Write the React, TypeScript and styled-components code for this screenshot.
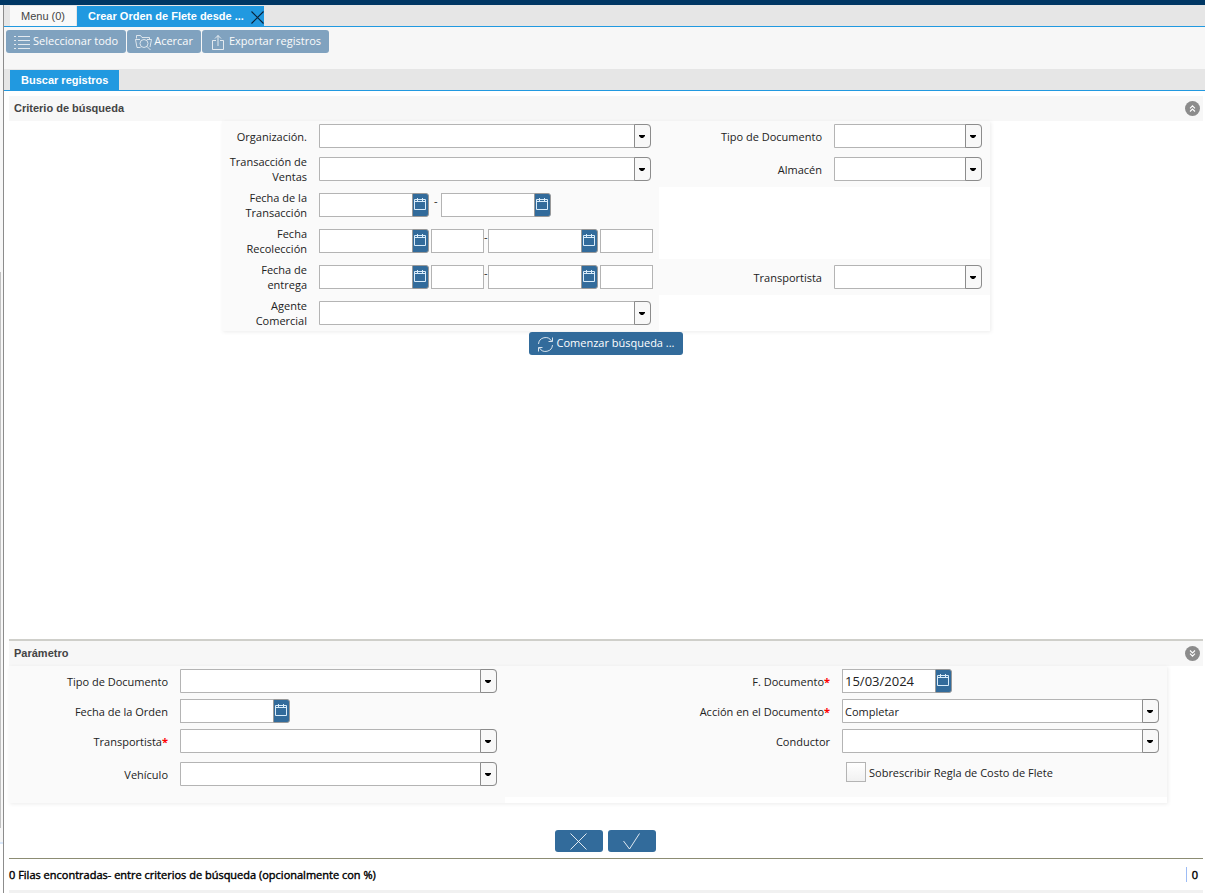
import React, { useId, useState } from "react";
import type { ReactNode } from "react";
import styled, { createGlobalStyle, css } from "styled-components";

const GlobalStyle = createGlobalStyle`
  *, *::before, *::after { box-sizing: border-box; }
  body { margin: 0; background: #fff; }
  body, button, input, select { font-family: "Open Sans", "Noto Sans", sans-serif; font-size: 11px; color: #222; }
`;

const arial = css`
  font-family: "Liberation Sans", Arial, sans-serif;
`;

const Page = styled.div`
  display: flex;
  flex-direction: column;
  min-height: 100vh;
`;
const TopBar = styled.header`
  height: 5px;
  background: #003764;
`;
const Body = styled.div`
  flex: 1;
  display: flex;
`;
const SideStrip = styled.aside`
  width: 4px;
  border-right: 1px solid #8c8c8c;
  background: #f7f7f7;
  display: flex;
  flex-direction: column;
`;
const SideContent = styled.div`
  flex: 1;
  margin-top: 67px;
  padding-top: 200px;
  background: #f7f7f7;
  border-bottom: 2px solid #d9e8fb;
  display: flex;
`;
const SideScroll = styled.div`
  width: 1px;
  margin-bottom: 14px;
  background: #c1c1c1;
`;
const SideFoot = styled.div`
  height: 49px;
  background: #fff;
`;
const Main = styled.main`
  flex: 1;
  min-width: 0;
  display: flex;
  flex-direction: column;
`;

const TabStrip = styled.nav`
  display: flex;
  gap: 1px;
  height: 22px;
  padding: 1px 0 0 6px;
  background: #e6e6e6;
  border-bottom: 1px solid #2199e0;
`;
const Tab = styled.button<{ $active?: boolean }>`
  ${arial}
  display: flex;
  align-items: center;
  gap: 7px;
  height: 20px;
  padding: 0 11px;
  border: 0;
  font-size: 11px;
  white-space: nowrap;
  background: ${(p) => (p.$active ? "#2199e0" : "#f9f9f9")};
  color: ${(p) => (p.$active ? "#fff" : "#444")};
  font-weight: ${(p) => (p.$active ? "bold" : "normal")};
`;
const ClosableTab = styled(Tab)`
  padding-right: 0;
  & svg { margin-top: 2px; }
`;

const Toolbar = styled.div`
  display: flex;
  align-items: flex-start;
  gap: 1px;
  height: 42px;
  padding: 3px 2px;
  background: #f7f7f7;
`;
const ActionButton = styled.button`
  display: flex;
  align-items: center;
  justify-content: center;
  gap: 2px;
  height: 23px;
  padding: 0 8px 2px;
  border: 0;
  border-radius: 3px;
  background: #326b9b;
  color: #fff;
  font-size: 11px;
  white-space: nowrap;
  &:disabled { opacity: 0.6; }
  & svg { flex: none; margin-top: 4px; }
`;
const IconButton = styled(ActionButton)`
  width: 48px;
  height: 22px;
  padding: 0;
  & svg { margin-top: 0; }
`;

const Content = styled.div`
  flex: 1;
  display: flex;
  flex-direction: column;
  padding: 5px 2px 0 5px;
`;
const Section = styled.section<{ $grow?: boolean }>`
  display: flex;
  flex-direction: column;
  flex: ${(p) => (p.$grow ? 1 : "none")};
`;
const SectionHead = styled.div<{ $ruled?: boolean }>`
  display: flex;
  align-items: center;
  justify-content: space-between;
  padding: 0 3px 0 5px;
  background: #f7f7f7;
  border-top: ${(p) => (p.$ruled ? "2px solid #cfcfca" : "0")};
`;
const SectionTitle = styled.h2`
  ${arial}
  margin: 0;
  font-size: 11px;
  line-height: 25px;
  color: #444;
`;
const RoundButton = styled.button`
  display: flex;
  align-items: center;
  justify-content: center;
  width: 15px;
  height: 15px;
  padding: 0;
  border: 0;
  border-radius: 50%;
  background: #8c8c8c;
`;

const SearchGrid = styled.div`
  display: grid;
  grid-template-columns: 97px 340fr 175px 156fr;
  grid-template-rows: 33px 33px repeat(4, 36px);
  width: 100%;
  max-width: 768px;
  margin: 0 auto;
  box-shadow: 1px 1px 4px rgba(0, 0, 0, 0.08);
`;
const ParamGrid = styled.div`
  display: grid;
  grid-template-columns: 171px 325fr 337px 325fr;
  grid-template-rows: 30px 30px 33px 38px 6px;
  margin-right: 36px;
  box-shadow: 1px 1px 4px rgba(0, 0, 0, 0.08);
`;
const LabelCell = styled.div<{ $center?: boolean }>`
  display: flex;
  align-items: ${(p) => (p.$center ? "center" : "flex-start")};
  justify-content: flex-end;
  padding-right: 12px;
  background: #fafafa;
`;
const FieldLabel = styled.label`
  display: flex;
  flex-direction: column;
  justify-content: center;
  min-height: 30px;
  line-height: 15px;
  text-align: right;
`;
const Required = styled.span`
  color: #f00;
  font-weight: bold;
`;
const FieldCell = styled.div<{ $center?: boolean }>`
  display: flex;
  align-items: ${(p) => (p.$center ? "center" : "flex-start")};
  min-width: 0;
  padding: ${(p) => (p.$center ? "0 8px 0 0" : "3px 8px 0 0")};
  background: #fafafa;
`;
const BlankCell = styled.div<{ $tinted?: boolean }>`
  grid-column: span 2;
  background: ${(p) => (p.$tinted ? "#fafafa" : "#fff")};
`;

const ComboBox = styled.div`
  flex: 1;
  display: grid;
  grid-template-columns: 1fr 17px;
  height: 24px;
`;
const ComboSelect = styled.select`
  grid-area: 1 / 1 / 2 / 3;
  appearance: none;
  min-width: 0;
  padding: 0 20px 0 2px;
  border: 1px solid #b4b4b4;
  border-radius: 0 4px 4px 0;
  background: #fff;
`;
const ComboArrow = styled.span`
  grid-area: 1 / 2 / 2 / 3;
  display: flex;
  align-items: center;
  justify-content: center;
  padding-right: 1px;
  border: 1px solid #8c8c8c;
  border-radius: 0 4px 4px 0;
  background: #f8f8f8;
  pointer-events: none;
`;

const DateBox = styled.div`
  display: flex;
  flex: none;
  width: 110px;
  height: 24px;
`;
const DateInput = styled.input`
  width: 93px;
  padding: 0 2px;
  border: 1px solid #b4b4b4;
  border-right: 0;
  background: #fff;
  font-size: 13px;
`;
const DateButton = styled.button`
  display: flex;
  width: 17px;
  padding: 3px 0 0 1px;
  border: 1px solid #999;
  border-radius: 0 3px 3px 0;
  background: #326b9b;
`;
const TimeInput = styled.input`
  flex: none;
  width: 53px;
  height: 24px;
  margin-left: 2px;
  border: 1px solid #b4b4b4;
  background: #fff;
`;
const Dash = styled.span<{ $wide?: boolean }>`
  flex: none;
  width: ${(p) => (p.$wide ? 12 : 4)}px;
  padding-left: ${(p) => (p.$wide ? 5 : 0)}px;
  line-height: 15px;
  align-self: flex-start;
  margin-top: 6px;
`;

const CheckLabel = styled.label`
  display: flex;
  align-items: center;
  gap: 3px;
  padding-left: 4px;
`;
const CheckInput = styled.input`
  appearance: none;
  width: 20px;
  height: 20px;
  margin: 0;
  border: 1px solid #b4b4b4;
  background: linear-gradient(#fff, #f1f1f1);
  &:checked { background: #326b9b; }
`;

const SearchAction = styled.div`
  display: flex;
  justify-content: center;
  padding-top: 1px;
`;
const ConfirmBar = styled.div`
  display: flex;
  justify-content: center;
  gap: 5px;
  padding: 27px 2px 6px 0;
`;
const StatusBar = styled.footer`
  display: flex;
  align-items: flex-start;
  justify-content: space-between;
  height: 35px;
  padding: 8px 5px 0 0;
  border-top: 1px solid #8c8c73;
  border-bottom: 3px solid #f1f1f1;
  color: #000;
  line-height: 15px;
  -webkit-text-stroke: 0.4px #000;
`;
const RowCount = styled.span`
  padding-left: 5px;
  border-left: 1px solid #9dbcf5;
`;

const CloseIcon = () => (
  <svg width="13" height="13" viewBox="0 0 13 13" fill="none" stroke="#0b2238" strokeWidth="1.1">
    <path d="M.5.5l12 12M12.5.5l-12 12" />
  </svg>
);
const ListIcon = () => (
  <svg width="17" height="17" viewBox="0 0 17 17" stroke="#fff" strokeOpacity=".8">
    <path d="M0 2.5h2M4 2.5h12M0 6.5h2M4 6.5h12M0 10.5h2M4 10.5h12M0 14.5h2M4 14.5h12" />
  </svg>
);
const FolderSearchIcon = () => (
  <svg width="17" height="17" viewBox="0 0 17 17" fill="none" stroke="#fff" strokeOpacity=".75">
    <path d="M1.5 4.5V1.5H5.5L7 3.5H14.5V5M5 5.5H.5L2 13.5H5.5M12 5.5H16.5L15 13" />
    <circle cx="9" cy="9.5" r="4" />
    <path d="M12 12.5l3.5 3.5" />
  </svg>
);
const ExportIcon = () => (
  <svg width="17" height="17" viewBox="0 0 17 17" fill="none" stroke="#fff" strokeOpacity=".8">
    <path d="M6 6.5H2.5V15.5H13.5V6.5H10M8 12V1.5M5 4.5l3-3 3 3" />
  </svg>
);
const RefreshIcon = () => (
  <svg width="17" height="17" viewBox="0 0 17 17" fill="none" stroke="#fff" strokeOpacity=".8">
    <path d="M1.5 8A7 7 0 0 1 14.5 5M15.5 1.5V5.5H11.5M15.5 9A7 7 0 0 1 2.5 12M1.5 15.5V11.5H5.5" />
  </svg>
);
const CalendarIcon = () => (
  <svg width="12" height="13" viewBox="0 0 12 13" fill="none" stroke="#d9ecfa">
    <path d="M.5 2.5H11.5V12.5H.5ZM.5 4.5H11.5M3.5 1V4M8.5 1V4" />
  </svg>
);
const ChevronsIcon = ({ down }: { down?: boolean }) => (
  <svg width="7" height="7" viewBox="0 0 7 7" fill="none" stroke="#fff" strokeWidth="1.1">
    <path d={down ? "M1 .5l2.5 2.5L6 .5M1 3.7l2.5 2.5L6 3.7" : "M1 3.3L3.5.8L6 3.3M1 6.5L3.5 4L6 6.5"} />
  </svg>
);
const ArrowIcon = () => (
  <svg width="6" height="3" viewBox="0 0 6 3" fill="#000">
    <path d="M0 0H6V1L4 3H2L0 1Z" />
  </svg>
);
const CancelIcon = () => (
  <svg width="17" height="17" viewBox="0 0 17 17" fill="none" stroke="#fff" strokeOpacity=".85">
    <path d="M.5.5l16 16M16.5.5l-16 16" />
  </svg>
);
const CheckIcon = () => (
  <svg width="17" height="17" viewBox="0 0 17 17" fill="none" stroke="#fff" strokeOpacity=".85">
    <path d="M.5 8l6 8L16.5.5" />
  </svg>
);

interface FieldProps {
  label: string;
  required?: boolean;
  center?: boolean;
  children: (id: string) => ReactNode;
}
function Field({ label, required, center, children }: FieldProps) {
  const id = useId();
  return (
    <>
      <LabelCell $center={center}>
        <FieldLabel htmlFor={id}>
          <span>
            {label}
            {required && <Required>*</Required>}
          </span>
        </FieldLabel>
      </LabelCell>
      <FieldCell $center={center}>{children(id)}</FieldCell>
    </>
  );
}

function Combo({ id, value = "" }: { id: string; value?: string }) {
  return (
    <ComboBox>
      <ComboSelect id={id} defaultValue={value}>
        <option value={value}>{value}</option>
      </ComboSelect>
      <ComboArrow>
        <ArrowIcon />
      </ComboArrow>
    </ComboBox>
  );
}

function DateField({ id, value = "", name }: { id?: string; value?: string; name?: string }) {
  return (
    <DateBox>
      <DateInput id={id} type="text" defaultValue={value} aria-label={name} />
      <DateButton type="button" aria-label="Calendario">
        <CalendarIcon />
      </DateButton>
    </DateBox>
  );
}

function DateTimeRange({ id }: { id: string }) {
  return (
    <>
      <DateField id={id} />
      <TimeInput type="text" aria-label="Hora desde" />
      <Dash>-</Dash>
      <DateField name="Fecha hasta" />
      <TimeInput type="text" aria-label="Hora hasta" />
    </>
  );
}

export default function App() {
  const [override, setOverride] = useState(false);
  return (
    <Page>
      <GlobalStyle />
      <TopBar />
      <Body>
        <SideStrip>
          <SideContent>
            <SideScroll />
          </SideContent>
          <SideFoot />
        </SideStrip>
        <Main>
          <TabStrip>
            <Tab type="button">Menu (0)</Tab>
            <ClosableTab type="button" $active>
              Crear Orden de Flete desde ...
              <CloseIcon />
            </ClosableTab>
          </TabStrip>
          <Toolbar>
            <ActionButton disabled><ListIcon />Seleccionar todo</ActionButton>
            <ActionButton disabled><FolderSearchIcon />Acercar</ActionButton>
            <ActionButton disabled><ExportIcon />Exportar registros</ActionButton>
          </Toolbar>
          <TabStrip>
            <Tab type="button" $active>Buscar registros</Tab>
          </TabStrip>
          <Content>
            <Section $grow>
              <SectionHead>
                <SectionTitle>Criterio de búsqueda</SectionTitle>
                <RoundButton type="button" aria-label="Contraer"><ChevronsIcon /></RoundButton>
              </SectionHead>
              <SearchGrid>
                <Field label="Organización.">{(id) => <Combo id={id} />}</Field>
                <Field label="Tipo de Documento">{(id) => <Combo id={id} />}</Field>
                <Field label="Transacción de Ventas">{(id) => <Combo id={id} />}</Field>
                <Field label="Almacén">{(id) => <Combo id={id} />}</Field>
                <Field label="Fecha de la Transacción" center>
                  {(id) => (
                    <>
                      <DateField id={id} />
                      <Dash $wide>-</Dash>
                      <DateField name="Fecha hasta" />
                    </>
                  )}
                </Field>
                <BlankCell />
                <Field label="Fecha Recolección" center>{(id) => <DateTimeRange id={id} />}</Field>
                <BlankCell />
                <Field label="Fecha de entrega" center>{(id) => <DateTimeRange id={id} />}</Field>
                <Field label="Transportista" center>{(id) => <Combo id={id} />}</Field>
                <Field label="Agente Comercial" center>{(id) => <Combo id={id} />}</Field>
                <BlankCell />
              </SearchGrid>
              <SearchAction>
                <ActionButton type="button"><RefreshIcon />Comenzar búsqueda ...</ActionButton>
              </SearchAction>
            </Section>
            <Section>
              <SectionHead $ruled>
                <SectionTitle>Parámetro</SectionTitle>
                <RoundButton type="button" aria-label="Expandir"><ChevronsIcon down /></RoundButton>
              </SectionHead>
              <ParamGrid>
                <Field label="Tipo de Documento">{(id) => <Combo id={id} />}</Field>
                <Field label="F. Documento" required>{(id) => <DateField id={id} value="15/03/2024" />}</Field>
                <Field label="Fecha de la Orden">{(id) => <DateField id={id} />}</Field>
                <Field label="Acción en el Documento" required>{(id) => <Combo id={id} value="Completar" />}</Field>
                <Field label="Transportista" required>{(id) => <Combo id={id} />}</Field>
                <Field label="Conductor">{(id) => <Combo id={id} />}</Field>
                <Field label="Vehículo">{(id) => <Combo id={id} />}</Field>
                <LabelCell />
                <FieldCell>
                  <CheckLabel>
                    <CheckInput type="checkbox" checked={override} onChange={(e) => setOverride(e.target.checked)} />
                    Sobrescribir Regla de Costo de Flete
                  </CheckLabel>
                </FieldCell>
                <BlankCell $tinted />
                <BlankCell />
              </ParamGrid>
              <ConfirmBar>
                <IconButton type="button" aria-label="Cancelar"><CancelIcon /></IconButton>
                <IconButton type="button" aria-label="Aceptar"><CheckIcon /></IconButton>
              </ConfirmBar>
              <StatusBar>
                <span>0 Filas encontradas- entre criterios de búsqueda (opcionalmente con %)</span>
                <RowCount>0</RowCount>
              </StatusBar>
            </Section>
          </Content>
        </Main>
      </Body>
    </Page>
  );
}
